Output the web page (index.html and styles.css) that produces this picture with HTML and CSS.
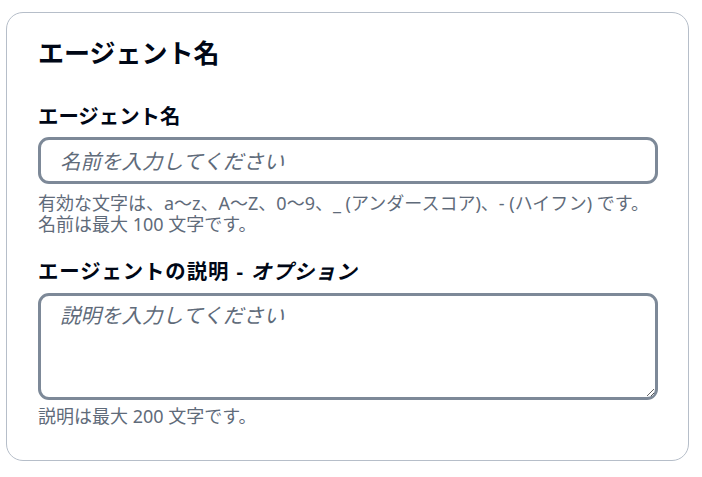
FILE: index.html
```html
<!DOCTYPE html>
<html lang="ja">
<head>
<meta charset="utf-8">
<link rel="stylesheet" href="styles.css">
</head>
<body>
<div class="page">
  <section class="card">
    <h2 class="title">エージェント名</h2>
    <div class="field first">
      <label class="label" for="name">エージェント名</label>
      <input class="input" id="name" type="text" placeholder="名前を入力してください">
      <p class="help">有効な文字は、a〜z、A〜Z、0〜9、_ (アンダースコア)、- (ハイフン) です。<br>名前は最大 100 文字です。</p>
    </div>
    <div class="field second">
      <label class="label wide" for="desc">エージェントの説明 - <i class="opt">オプション</i></label>
      <textarea class="textarea" id="desc" placeholder="説明を入力してください"></textarea>
      <p class="help">説明は最大 200 文字です。</p>
    </div>
  </section>
</div>
</body>
</html>
```

FILE: styles.css
```css
html, body {
  margin: 0;
  padding: 0;
  background: #ffffff;
}
body {
  font-family: "Noto Sans", "Noto Sans CJK JP", sans-serif;
  color: #000716;
}
.page {
  padding: 12px 0 0 6px;
}
.card {
  box-sizing: border-box;
  width: 683px;
  border: 1px solid #b6bec9;
  border-radius: 17px;
  padding: 24px 31px 33px 31px;
  background: #ffffff;
}
.title {
  margin: 0;
  font-size: 26px;
  line-height: 32px;
  font-weight: 700;
}
.field {
  display: flex;
  flex-direction: column;
}
.field.first {
  margin-top: 33px;
}
.field.second {
  margin-top: 22px;
}
.label {
  font-size: 20.4px;
  line-height: 28px;
  font-weight: 700;
  margin-bottom: 7px;
}
.label.wide {
  word-spacing: 1px;
  letter-spacing: 0.9px;
}
.opt {
  font-style: italic;
}
.input, .textarea {
  box-sizing: border-box;
  width: 620px;
  border: 3px solid #7d8998;
  border-radius: 11px;
  font-family: "Noto Sans", "Noto Sans CJK JP", sans-serif;
  font-size: 20.5px;
  color: #000716;
  padding: 0 19px;
  margin: 0;
  outline: none;
  background: #ffffff;
}
.input {
  height: 47px;
}
.textarea {
  height: 107px;
  padding-top: 5px;
  line-height: 28px;
  resize: vertical;
  margin-top: 1px;
}
.input::placeholder, .textarea::placeholder {
  color: #5f6b7a;
  font-style: italic;
  opacity: 1;
}
.help {
  margin: 9px 0 0 0;
  font-size: 18px;
  line-height: 21px;
  color: #5f6b7a;
}
.second .help {
  margin-top: 6px;
}
```
